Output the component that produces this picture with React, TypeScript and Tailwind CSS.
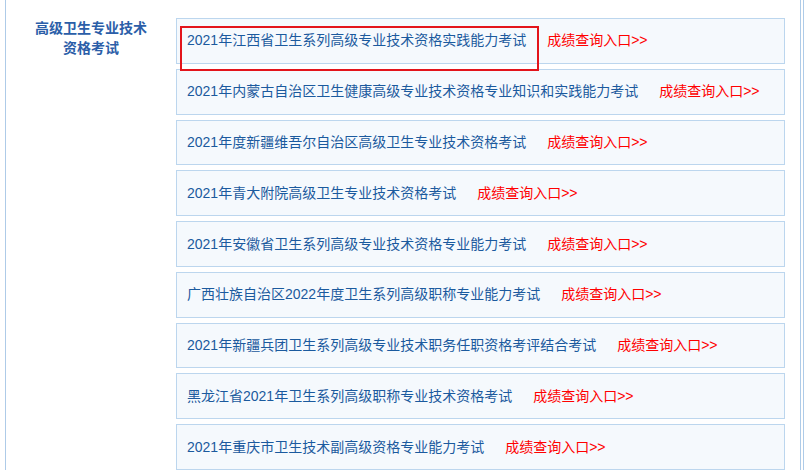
import React from "react";

type Exam = {
  title: string;
};

const exams: Exam[] = [
  { title: "2021年江西省卫生系列高级专业技术资格实践能力考试" },
  { title: "2021年内蒙古自治区卫生健康高级专业技术资格专业知识和实践能力考试" },
  { title: "2021年度新疆维吾尔自治区高级卫生专业技术资格考试" },
  { title: "2021年青大附院高级卫生专业技术资格考试" },
  { title: "2021年安徽省卫生系列高级专业技术资格专业能力考试" },
  { title: "广西壮族自治区2022年度卫生系列高级职称专业能力考试" },
  { title: "2021年新疆兵团卫生系列高级专业技术职务任职资格考评结合考试" },
  { title: "黑龙江省2021年卫生系列高级职称专业技术资格考试" },
  { title: "2021年重庆市卫生技术副高级资格专业能力考试" },
];

const font = {
  fontFamily: '"Liberation Sans", "Noto Sans CJK SC", sans-serif',
};

const App: React.FC = () => {
  return (
    <div
      className="relative h-[470px] w-[810px] overflow-hidden bg-white"
      style={font}
    >
      <div className="flex h-full">
        <div className="ml-[5px] flex h-full w-[796px] border-l border-r border-[#aecbe8]">
          {/* 左侧分类 */}
          <div className="w-[170px] shrink-0 pt-[18px] text-center text-[14px] font-bold leading-[20px] text-[#2b5ea8]">
            高级卫生专业技术
            <br />
            资格考试
          </div>

          {/* 考试列表 */}
          <div className="flex w-[609px] flex-col gap-[5px] pt-[18px]">
            {exams.map((exam) => (
              <div
                key={exam.title}
                className="flex h-[46px] items-center border border-[#bcd6ee] bg-[#f5f9fd] pl-[10px] text-[14px] font-normal whitespace-nowrap"
              >
                <span className="text-[#1b5a9e]">{exam.title}</span>
                <a href="#" className="ml-[21px] font-normal text-[#ff0000]">
                  成绩查询入口&gt;&gt;
                </a>
              </div>
            ))}
          </div>
        </div>
        <div className="ml-[2px] h-full border-l border-[#aecbe8]" />
      </div>

      {/* 红框标注 */}
      <div className="pointer-events-none absolute left-[180px] top-[26px] h-[45px] w-[359px] border-2 border-[#e3141b]" />
    </div>
  );
};

export default App;
